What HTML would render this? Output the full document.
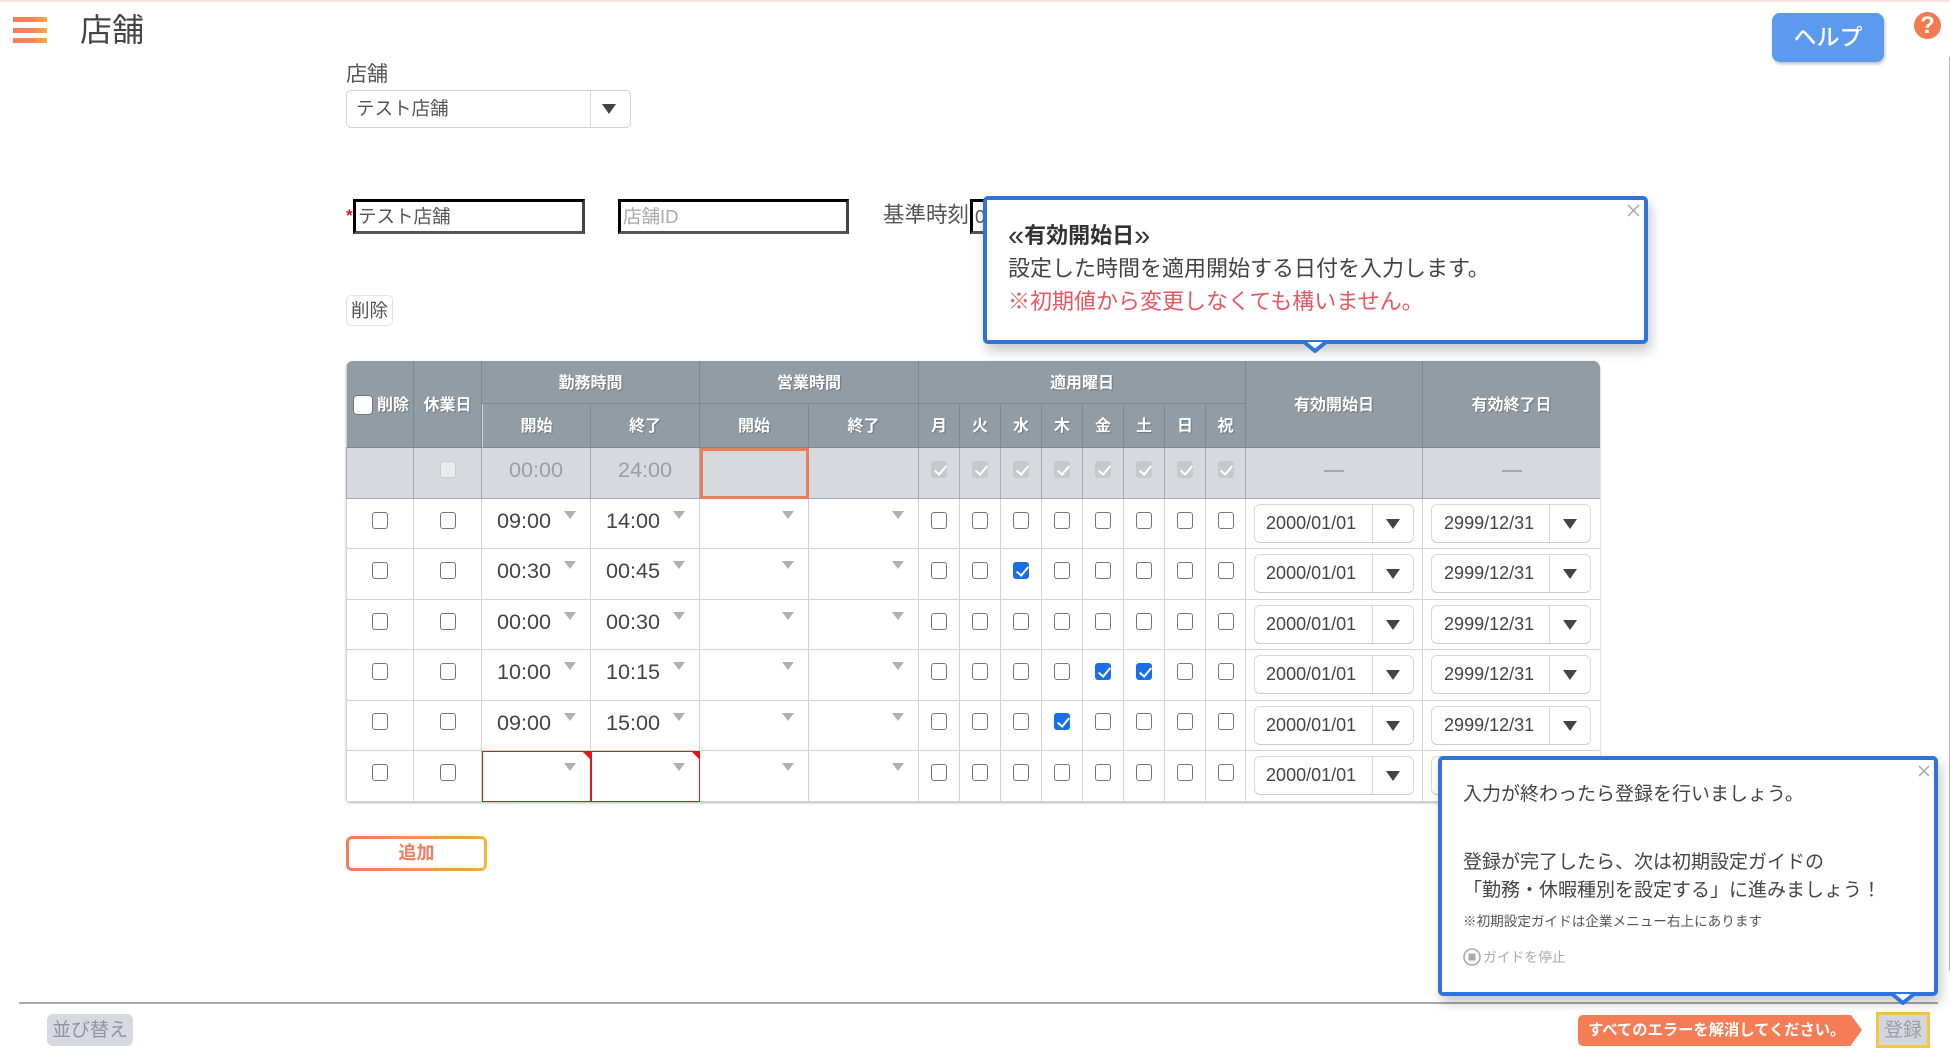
<!DOCTYPE html>
<html lang="ja"><head><meta charset="utf-8"><title>店舗</title>
<style>
*{box-sizing:border-box}
html,body{margin:0;padding:0;width:1950px;height:1050px;overflow:hidden;background:#fff}
body{position:relative;font-family:"Liberation Sans","Noto Sans CJK JP",sans-serif;color:#555}
.abs{position:absolute}
.txt{position:absolute;white-space:nowrap;line-height:1}
.bar{position:absolute;left:13px;width:34px;height:5px;background:linear-gradient(90deg,#f47c5c,#f4855a 60%,#f8aa38)}
.sel{position:absolute;border:1px solid #d2d2d2;border-radius:5px;background:#fff}
.sel .sp{position:absolute;top:0;bottom:0;width:1px;background:#d8d8d8}
.tri{position:absolute;width:0;height:0;border-left:7px solid transparent;border-right:7px solid transparent;border-top:10px solid #444}
.inp{position:absolute;top:199px;height:35px;border:3px solid #000;border-right-color:#444;border-bottom-color:#555;background:#fff;font-size:18.5px;line-height:30px;padding-left:2px;white-space:nowrap;overflow:hidden;color:#555}
#wrap{position:absolute;left:346px;top:361px;width:1254px;height:441px;border-radius:7px 7px 4px 4px;overflow:hidden;box-shadow:0 1px 2px rgba(0,0,0,.3)}
table{border-collapse:separate;border-spacing:0;table-layout:fixed;width:1254px;font-size:16px}
td,th{padding:0;position:relative;border-right:1px solid #d3d3d3;border-bottom:1px solid #d3d3d3}
td:first-child,th:first-child{border-left:1px solid #d3d3d3}
th{background:#929ca5;color:#fff;font-weight:700;font-size:16px;text-shadow:1px 1px 1px rgba(0,0,0,.25);border-color:#7d8892;text-align:center;line-height:1;padding-top:3px}
tr.h2 th{padding-top:2px}
tr.g td{background:#d6dadf;border-color:#a5abb2}
.c{position:absolute;left:50%;top:13px;width:16px;height:16.5px;margin-left:-8px;border:1.5px solid #767676;border-radius:3px;background:#fff}
.k{background:#1a6ee6;border:none}
.k:after,.x:after{content:"";position:absolute;left:5.5px;top:2px;width:5px;height:10px;border:solid #fff;border-width:0 2px 2px 0;transform:rotate(40deg)}
.n{background:#e9ebed;border:1px solid #ccc}
.x{background:#c6c8ca;border:none}
.t{position:absolute;left:15px;top:0;line-height:43px;font-size:21.6px;color:#444;font-family:"Liberation Sans",sans-serif}
.a{position:absolute;left:82px;top:12px;width:0;height:0;border-left:6px solid transparent;border-right:6px solid transparent;border-top:8px solid #b0b0b0}
td:nth-child(6) .a{left:83px}
.gt{position:absolute;left:0;right:0;top:0;line-height:43px;text-align:center;font-size:21.6px;color:#9a9fa4}
.dash{position:absolute;left:50%;margin-left:-10px;top:22px;width:20px;height:1.5px;background:#a3a7ab}
.d{position:absolute;left:8px;top:5px;width:160px;height:39px;border:1px solid #d8d8d8;border-bottom-color:#ccc;border-radius:6px;background:#fff;font-size:18px;line-height:37px;padding-left:11px;color:#444;font-family:"Liberation Sans",sans-serif}
td:last-child .d{padding-left:12px}
.d:before{content:"";position:absolute;left:117px;top:0;bottom:0;width:1px;background:#d8d8d8}
.d:after{content:"";position:absolute;left:131px;top:14px;width:0;height:0;border-left:7px solid transparent;border-right:7px solid transparent;border-top:10px solid #444}
.e{position:absolute;left:0;top:0;right:-1px;bottom:-1px;border:1.5px solid #e5131d;z-index:2}
.e:after{content:"";position:absolute;right:-1px;top:-1px;width:0;height:0;border-top:9px solid #e5131d;border-left:9px solid transparent}
.pop{position:absolute;background:#fff;border:4px solid #2f74dd;border-radius:5px;box-shadow:3px 7px 12px rgba(0,0,0,.22);z-index:10}
.tip{position:absolute;z-index:11}
.gm{font-weight:400;font-size:29px;line-height:0;position:relative;top:2px}
</style></head>
<body>
<div class="abs" style="left:0;top:0;width:1950px;height:2px;background:#f8e2de"></div>
<div class="bar" style="top:17px"></div><div class="bar" style="top:27.5px"></div><div class="bar" style="top:38px"></div>
<div class="txt" style="left:80px;top:14px;font-size:32px;color:#444">店舗</div>

<div class="abs" style="left:1772px;top:13px;width:112px;height:49px;background:#5b9aef;border-radius:8px;box-shadow:1px 2px 3px rgba(0,0,0,.25);color:#fff;font-size:23px;font-weight:500;text-align:center;line-height:49px">ヘルプ</div>
<div class="abs" style="left:1914px;top:12px;width:27px;height:27px;border-radius:50%;background:#f57a50;color:#fff;font-size:24px;font-weight:700;text-align:center;line-height:27px">?</div>
<div class="abs" style="left:1949px;top:57px;width:1px;height:914px;background:#b5b5b5"></div>

<div class="txt" style="left:346px;top:64px;font-size:21px">店舗</div>
<div class="sel" style="left:346px;top:90px;width:285px;height:38px"><div class="sp" style="left:243px"></div><div class="tri" style="left:255px;top:13px"></div>
<div class="txt" style="left:9px;top:9px;font-size:18.5px">テスト店舗</div></div>

<div class="txt" style="left:346px;top:207px;font-size:17px;color:#e01020;font-weight:700">*</div>
<div class="inp" style="left:353px;width:232px">テスト店舗</div>
<div class="inp" style="left:618px;width:231px;color:#aaa">店舗ID</div>
<div class="txt" style="left:883px;top:205px;font-size:21.5px">基準時刻</div>
<div class="inp" style="left:970px;width:60px">0</div>

<div class="abs" style="left:346px;top:295px;width:47px;height:31px;border:1px solid #e3e3e3;border-radius:5px;font-size:18.5px;line-height:29px;text-align:center">削除</div>

<div id="wrap">
<table>
<colgroup><col style="width:68px"><col style="width:68px"><col style="width:109px"><col style="width:109px"><col style="width:109px"><col style="width:110px"><col style="width:41px"><col style="width:41px"><col style="width:41px"><col style="width:41px"><col style="width:41px"><col style="width:41px"><col style="width:41px"><col style="width:40px"><col style="width:177px"><col style="width:178px"></colgroup>
<tr style="height:43px">
<th rowspan="2"><span class="abs" style="left:6px;top:34px;width:20px;height:20px;background:#fff;border:1.5px solid #6d7780;border-radius:4px"></span><span class="abs" style="left:30px;top:37px;white-space:nowrap">削除</span></th>
<th rowspan="2">休業日</th><th colspan="2">勤務時間</th><th colspan="2">営業時間</th><th colspan="8">適用曜日</th><th rowspan="2">有効開始日</th><th rowspan="2">有効終了日</th></tr>
<tr class="h2" style="height:44px"><th>開始</th><th>終了</th><th>開始</th><th>終了</th><th>月</th><th>火</th><th>水</th><th>木</th><th>金</th><th>土</th><th>日</th><th>祝</th></tr>
<tr class="g" style="height:51px"><td></td><td><i class="c n"></i></td><td><div class="gt">00:00</div></td><td><div class="gt">24:00</div></td><td><div class="abs" style="left:0;top:0;right:-1px;bottom:-1px;border:3px solid #e87d5f"></div></td><td></td><td><i class="c x"></i></td><td><i class="c x"></i></td><td><i class="c x"></i></td><td><i class="c x"></i></td><td><i class="c x"></i></td><td><i class="c x"></i></td><td><i class="c x"></i></td><td><i class="c x"></i></td><td><div class="dash"></div></td><td><div class="dash"></div></td></tr>
<tr style="height:50px"><td><i class="c"></i></td><td><i class="c"></i></td><td><span class="t">09:00</span><i class="a"></i></td><td><span class="t">14:00</span><i class="a"></i></td><td><i class="a"></i></td><td><i class="a"></i></td><td><i class="c"></i></td><td><i class="c"></i></td><td><i class="c"></i></td><td><i class="c"></i></td><td><i class="c"></i></td><td><i class="c"></i></td><td><i class="c"></i></td><td><i class="c"></i></td><td><div class="d">2000/01/01</div></td><td><div class="d">2999/12/31</div></td></tr>
<tr style="height:51px"><td><i class="c"></i></td><td><i class="c"></i></td><td><span class="t">00:30</span><i class="a"></i></td><td><span class="t">00:45</span><i class="a"></i></td><td><i class="a"></i></td><td><i class="a"></i></td><td><i class="c"></i></td><td><i class="c"></i></td><td><i class="c k"></i></td><td><i class="c"></i></td><td><i class="c"></i></td><td><i class="c"></i></td><td><i class="c"></i></td><td><i class="c"></i></td><td><div class="d">2000/01/01</div></td><td><div class="d">2999/12/31</div></td></tr>
<tr style="height:50px"><td><i class="c"></i></td><td><i class="c"></i></td><td><span class="t">00:00</span><i class="a"></i></td><td><span class="t">00:30</span><i class="a"></i></td><td><i class="a"></i></td><td><i class="a"></i></td><td><i class="c"></i></td><td><i class="c"></i></td><td><i class="c"></i></td><td><i class="c"></i></td><td><i class="c"></i></td><td><i class="c"></i></td><td><i class="c"></i></td><td><i class="c"></i></td><td><div class="d">2000/01/01</div></td><td><div class="d">2999/12/31</div></td></tr>
<tr style="height:51px"><td><i class="c"></i></td><td><i class="c"></i></td><td><span class="t">10:00</span><i class="a"></i></td><td><span class="t">10:15</span><i class="a"></i></td><td><i class="a"></i></td><td><i class="a"></i></td><td><i class="c"></i></td><td><i class="c"></i></td><td><i class="c"></i></td><td><i class="c"></i></td><td><i class="c k"></i></td><td><i class="c k"></i></td><td><i class="c"></i></td><td><i class="c"></i></td><td><div class="d">2000/01/01</div></td><td><div class="d">2999/12/31</div></td></tr>
<tr style="height:50px"><td><i class="c" style="top:12px"></i></td><td><i class="c" style="top:12px"></i></td><td><span class="t">09:00</span><i class="a"></i></td><td><span class="t">15:00</span><i class="a"></i></td><td><i class="a"></i></td><td><i class="a"></i></td><td><i class="c" style="top:12px"></i></td><td><i class="c" style="top:12px"></i></td><td><i class="c" style="top:12px"></i></td><td><i class="c k" style="top:12px"></i></td><td><i class="c" style="top:12px"></i></td><td><i class="c" style="top:12px"></i></td><td><i class="c" style="top:12px"></i></td><td><i class="c" style="top:12px"></i></td><td><div class="d">2000/01/01</div></td><td><div class="d">2999/12/31</div></td></tr>
<tr style="height:51px"><td><i class="c"></i></td><td><i class="c"></i></td><td><div class="e"></div><i class="a" style="z-index:3"></i></td><td><div class="e"></div><i class="a" style="z-index:3"></i></td><td><i class="a"></i></td><td><i class="a"></i></td><td><i class="c"></i></td><td><i class="c"></i></td><td><i class="c"></i></td><td><i class="c"></i></td><td><i class="c"></i></td><td><i class="c"></i></td><td><i class="c"></i></td><td><i class="c"></i></td><td><div class="d">2000/01/01</div></td><td><div class="d">2999/12/31</div></td></tr>
</table>
</div>

<div class="abs" style="left:346px;top:836px;width:141px;height:35px;border-radius:6px;padding:3px;background:linear-gradient(90deg,#f47c5c,#f5a03e 90%,#f6b83a)"><div style="background:#fff;height:29px;border-radius:3px;color:#f47c5c;font-size:18px;font-weight:700;text-align:center;line-height:28px">追加</div></div>

<div class="pop" style="left:983px;top:196px;width:665px;height:148px"></div>
<svg class="tip" style="left:1301px;top:339px" width="28" height="16"><path d="M3 3L14 12L25 3Z" fill="#fff"/><path d="M0 3H3L14 12L25 3H28" fill="none" stroke="#2f74dd" stroke-width="4" stroke-linejoin="round"/></svg>
<svg class="abs" style="left:1627px;top:204px;z-index:12" width="13" height="13"><path d="M1 1L12 12M12 1L1 12" stroke="#a6a6a6" stroke-width="1.5" fill="none"/></svg>
<div class="txt" style="left:1008px;top:225px;font-size:22px;font-weight:700;color:#333;z-index:12"><span class="gm">«</span>有効開始日<span class="gm">»</span></div>
<div class="txt" style="left:1008px;top:258px;font-size:22px;color:#444;z-index:12">設定した時間を適用開始する日付を入力します。</div>
<div class="txt" style="left:1008px;top:291px;font-size:22px;color:#ea5560;z-index:12">※初期値から変更しなくても構いません。</div>

<div class="pop" style="left:1438px;top:756px;width:500px;height:240px"></div>
<svg class="tip" style="left:1889px;top:991px" width="28" height="16"><path d="M3 3L14 12L25 3Z" fill="#fff"/><path d="M0 3H3L14 12L25 3H28" fill="none" stroke="#2f74dd" stroke-width="4" stroke-linejoin="round"/></svg>
<svg class="abs" style="left:1918px;top:765px;z-index:12" width="12" height="12"><path d="M1 1L11 11M11 1L1 11" stroke="#a6a6a6" stroke-width="1.5" fill="none"/></svg>
<div class="txt" style="left:1463px;top:785px;font-size:19px;color:#444;z-index:12">入力が終わったら登録を行いましょう。</div>
<div class="txt" style="left:1463px;top:853px;font-size:19px;color:#444;z-index:12">登録が完了したら、次は初期設定ガイドの</div>
<div class="txt" style="left:1463px;top:881px;font-size:19px;color:#444;z-index:12">「勤務・休暇種別を設定する」に進みましょう！</div>
<div class="txt" style="left:1463px;top:915px;font-size:13.6px;color:#555;z-index:12">※初期設定ガイドは企業メニュー右上にあります</div>
<svg class="abs" style="left:1463px;top:948px;z-index:12" width="18" height="18"><circle cx="9" cy="9" r="8" fill="none" stroke="#aaa" stroke-width="1.6"/><rect x="5.5" y="5.5" width="7" height="7" fill="#aaa"/></svg>
<div class="txt" style="left:1483px;top:951px;font-size:13.8px;color:#aaa;z-index:12">ガイドを停止</div>

<div class="abs" style="left:19px;top:1002px;width:1919px;height:1.5px;background:#a8a8a8"></div>
<div class="abs" style="left:47px;top:1014px;width:86px;height:32px;background:#d6d9df;border-radius:6px;color:#90959d;font-size:19px;text-align:center;line-height:33px">並び替え</div>
<div class="abs" style="left:1578px;top:1015px;width:273px;height:31px;background:#f57c55;border-radius:5px 0 0 5px;color:#fff;font-weight:700;font-size:15.3px;line-height:31px;padding-left:10px;white-space:nowrap">すべてのエラーを解消してください。</div>
<div class="abs" style="left:1851px;top:1015px;width:0;height:0;border-left:11px solid #f57c55;border-top:15.5px solid transparent;border-bottom:15.5px solid transparent"></div>
<div class="abs" style="left:1876px;top:1012px;width:54px;height:36px;background:#d3d7dd;border:3px solid #f5c63e;color:#9a9fa6;font-size:19px;text-align:center;line-height:31px">登録</div>
</body></html>
